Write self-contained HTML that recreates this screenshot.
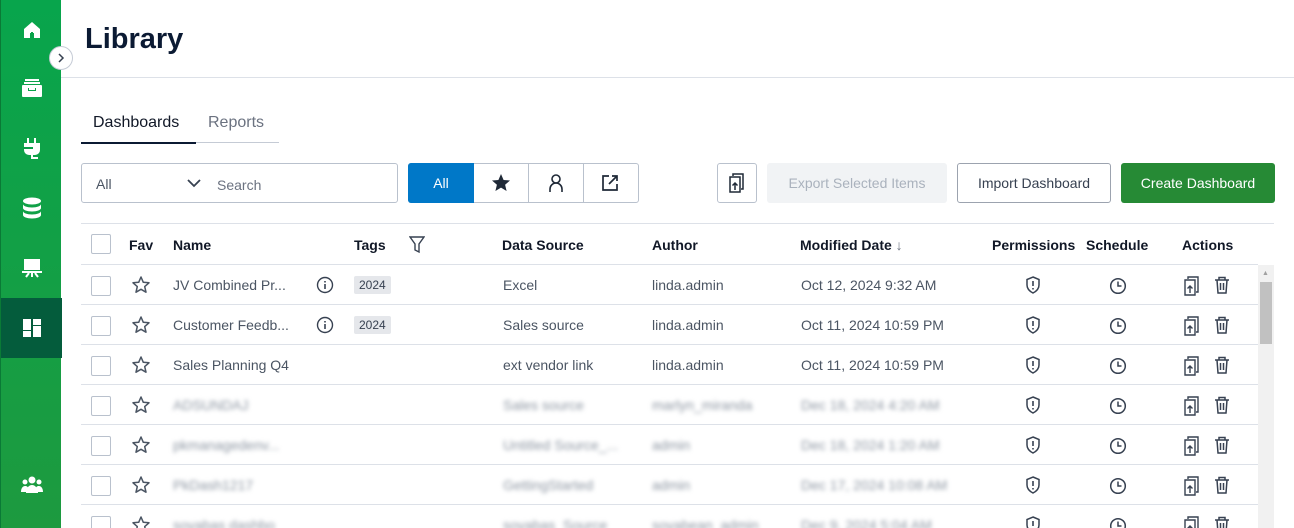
<!DOCTYPE html>
<html><head><meta charset="utf-8"><style>
*{box-sizing:border-box;margin:0;padding:0}
html,body{width:1294px;height:528px;overflow:hidden}
body{background:#fff;font-family:"Liberation Sans",sans-serif;position:relative;color:#1f2937}
.side{position:absolute;left:0;top:0;width:61px;height:528px;background:linear-gradient(#08a54c,#1d9a3f);border-left:1px solid #0a7a36}
.side .it{position:absolute;left:0;width:61px;height:60px;display:flex;align-items:center;justify-content:center}
.side .act{background:#045c3c}
.tog{position:absolute;left:49px;top:46px;width:24px;height:24px;border-radius:50%;background:#fff;border:1px solid #c5cbd5;display:flex;align-items:center;justify-content:center;z-index:3}
h1{position:absolute;left:85px;top:23px;font-size:29px;font-weight:bold;color:#0b1a33}
.hr{position:absolute;left:61px;top:77px;width:1233px;height:1px;background:#dde1e8}
.tabs{position:absolute;left:81px;top:112px;width:198px;height:31px;border-bottom:1px solid #c5cbd5;font-size:16px}
.tabs span{position:absolute;top:2px}
.abs{position:absolute}
.box{position:absolute;border:1px solid #b9c1cd;border-radius:3px}
.btn{position:absolute;top:163px;height:40px;border-radius:3px;font-size:14px;display:flex;align-items:center;justify-content:center}
.row{position:absolute;left:81px;width:1177px;height:40px;border-top:1px solid #dde1e8;font-size:14px;color:#4b5563}
.row>*{position:absolute}
.cb{left:10px;top:11px;width:20px;height:20px;border:1px solid #b9c1cd;border-radius:2px}
.st{left:50px;top:10px}
.t{top:12px}
.blur{filter:blur(2px);color:#8d96a2}
.tag{left:273px;top:11px;background:#e5e7eb;border-radius:2px;font-size:12px;padding:2px 5px;color:#374151}
.hd{font-size:14px;font-weight:bold;color:#111827}
</style></head><body>
<div class="side">
 <div class="it" style="top:0"><svg width="20" height="20" viewBox="0 0 20 20"><path d="M10 2L2 9v9h6v-5h4v5h6V9z" fill="#fff"/><rect x="9" y="12" width="2" height="5" fill="#0aa34a"/></svg></div>
 <div class="it" style="top:58px"><svg width="22" height="22" viewBox="0 0 22 22"><rect x="4" y="2" width="14" height="2" fill="#fff"/><rect x="3" y="5" width="16" height="2" fill="#fff"/><rect x="1" y="8" width="20" height="12" rx="1" fill="#fff"/><rect x="7" y="11" width="8" height="3" fill="#0aa34a"/><rect x="8" y="11" width="6" height="2" fill="#fff"/></svg></div>
 <div class="it" style="top:118px"><svg width="20" height="22" viewBox="0 0 20 22"><rect x="5" y="1" width="2" height="5" fill="#fff"/><rect x="12" y="1" width="2" height="5" fill="#fff"/><path d="M2 6h16v7a5 5 0 0 1-5 5H7a5 5 0 0 1-5-5z" fill="#fff"/><rect x="1" y="10" width="10" height="2" fill="#0b9e48"/><path d="M10 18v3h6" stroke="#fff" stroke-width="2" fill="none"/></svg></div>
 <div class="it" style="top:178px"><svg width="20" height="22" viewBox="0 0 20 22"><ellipse cx="10" cy="4" rx="9" ry="3.5" fill="#fff"/><path d="M1 7c0 2 4 3.5 9 3.5S19 9 19 7v4c0 2-4 3.5-9 3.5S1 13 1 11z" fill="#fff"/><path d="M1 14c0 2 4 3.5 9 3.5S19 16 19 14v4c0 2-4 3.5-9 3.5S1 20 1 18z" fill="#fff"/></svg></div>
 <div class="it" style="top:238px"><svg width="20" height="20" viewBox="0 0 20 20"><rect x="2" y="1" width="16" height="11" fill="#fff"/><rect x="0" y="13" width="20" height="2" fill="#fff"/><path d="M4 19l3-4M16 19l-3-4M10 15v4" stroke="#fff" stroke-width="2"/></svg></div>
 <div class="it act" style="top:298px"><svg width="20" height="20" viewBox="0 0 20 20"><rect x="1" y="1" width="8" height="11" fill="#fff"/><rect x="1" y="13" width="8" height="6" fill="#fff"/><rect x="11" y="1" width="8" height="6" fill="#fff"/><rect x="11" y="8" width="8" height="11" fill="#fff"/></svg></div>
 <div class="it" style="top:455px"><svg width="22" height="20" viewBox="0 0 22 20"><circle cx="11" cy="5" r="3.5" fill="#fff"/><circle cx="4" cy="7" r="2.5" fill="#fff"/><circle cx="18" cy="7" r="2.5" fill="#fff"/><path d="M5 18c0-5 3-8 6-8s6 3 6 8z" fill="#fff"/><path d="M0 17c0-4 2-6 4-6s3 1 3 2v4zM22 17c0-4-2-6-4-6s-3 1-3 2v4z" fill="#fff"/></svg></div>
</div>
<div class="tog"><svg width="10" height="10" viewBox="0 0 10 10"><path d="M3 1l4 4-4 4" stroke="#374151" stroke-width="1.5" fill="none"/></svg></div>
<h1>Library</h1>
<div class="hr"></div>
<div class="tabs"><span style="left:12px;color:#111827">Dashboards</span><span style="left:127px;color:#6b7280">Reports</span><div class="abs" style="left:0;top:30px;width:115px;height:2px;background:#0b1a33"></div></div>

<div class="box" style="left:81px;top:163px;width:317px;height:40px"></div>
<div class="abs" style="left:96px;top:176px;font-size:14px;color:#4b5563">All</div>
<svg class="abs" style="left:187px;top:178px" width="14" height="10" viewBox="0 0 14 10"><path d="M1 2l6 6 6-6" stroke="#374151" stroke-width="1.8" fill="none"/></svg>
<div class="abs" style="left:217px;top:177px;font-size:14px;color:#6b7280">Search</div>

<div class="box" style="left:408px;top:163px;width:231px;height:40px"></div>
<div class="abs" style="left:408px;top:163px;width:66px;height:40px;background:#0078c8;border-radius:3px 0 0 3px;color:#fff;font-size:14px;display:flex;align-items:center;justify-content:center">All</div>
<div class="abs" style="left:528px;top:164px;width:1px;height:38px;background:#b9c1cd"></div>
<div class="abs" style="left:583px;top:164px;width:1px;height:38px;background:#b9c1cd"></div>
<svg class="abs" style="left:491px;top:173px" width="20" height="20" viewBox="0 0 20 20"><path d="M10 1l2.6 6 6.4.5-4.9 4.2 1.5 6.3L10 14.6 4.4 18l1.5-6.3L1 7.5 7.4 7z" fill="#1f2937"/></svg>
<svg class="abs" style="left:547px;top:173px" width="18" height="20" viewBox="0 0 18 20"><circle cx="9" cy="6" r="4" stroke="#1f2937" stroke-width="1.6" fill="none"/><path d="M3 19v-3a6 6 0 0 1 12 0v3" stroke="#1f2937" stroke-width="1.6" fill="none"/></svg>
<svg class="abs" style="left:601px;top:174px" width="18" height="18" viewBox="0 0 18 18"><path d="M8 2H2v14h14v-6M11 2h5v5M16 2l-8 8" stroke="#1f2937" stroke-width="1.7" fill="none"/></svg>

<div class="box" style="left:717px;top:163px;width:40px;height:40px"></div>
<svg class="abs" style="left:729px;top:173px" width="16" height="20" viewBox="0 0 16 20"><path d="M4 3V1h10v15h-2M1 4h10v15H1z" stroke="#1f2937" stroke-width="1.5" fill="none"/><path d="M6 17v-7M3.5 12.5L6 10l2.5 2.5" stroke="#1f2937" stroke-width="1.5" fill="none"/></svg>
<div class="btn" style="left:767px;width:180px;background:#f1f3f5;color:#aab2bd">Export Selected Items</div>
<div class="btn" style="left:957px;width:154px;border:1px solid #9ca3af;color:#374151">Import Dashboard</div>
<div class="btn" style="left:1121px;width:154px;background:#268a35;color:#fff">Create Dashboard</div>

<div class="abs" style="left:81px;top:223px;width:1193px;height:1px;background:#dde1e8"></div>
<div class="row hd" style="top:224px;border-top:none">
 <div class="cb" style="top:10px"></div>
 <span style="left:48px;top:13px">Fav</span><span style="left:92px;top:13px">Name</span><span style="left:273px;top:13px">Tags</span>
 <svg style="left:328px;top:12px" width="16" height="18" viewBox="0 0 16 18"><path d="M1 1h14l-5 7v8l-4-2V8z" stroke="#374151" stroke-width="1.4" fill="none"/></svg>
 <span style="left:421px;top:13px">Data Source</span><span style="left:571px;top:13px">Author</span><span style="left:719px;top:13px">Modified Date <span style="font-weight:normal;color:#6b7280">↓</span></span>
 <span style="left:911px;top:13px">Permissions</span><span style="left:1005px;top:13px">Schedule</span><span style="left:1101px;top:13px">Actions</span>
</div>

<div class="abs" style="left:1258px;top:265px;width:16px;height:263px;background:#f1f1f1"></div>
<div class="abs" style="left:1260px;top:282px;width:12px;height:62px;background:#c1c1c1"></div>
<div class="abs" style="left:1262px;top:270px;font-size:7px;color:#a0a0a0">▲</div>

<div id="rows"></div>
<script>
var star='<svg class="st" width="20" height="20" viewBox="0 0 20 20"><path d="M10 2l2.3 5.3 5.7.5-4.3 3.8 1.3 5.6L10 14.3 5 17.2l1.3-5.6L2 7.8l5.7-.5z" stroke="#4b5563" stroke-width="1.5" fill="none" stroke-linejoin="round"/></svg>';
var perm='<svg style="left:945px;top:11px" width="14" height="18" viewBox="0 0 14 18"><path d="M7 1l6 2.5V9c0 4-3 6.5-6 8-3-1.5-6-4-6-8V3.5z" stroke="#374151" stroke-width="1.5" fill="none"/><path d="M7 5v5M7 12v1.5" stroke="#374151" stroke-width="1.6"/></svg>';
var clk='<svg style="left:1028px;top:12px" width="18" height="18" viewBox="0 0 18 18"><circle cx="9" cy="9" r="7.3" stroke="#374151" stroke-width="1.5" fill="none"/><path d="M9 4.5V9h3.5" stroke="#374151" stroke-width="1.5" fill="none"/></svg>';
var act='<svg style="left:1103px;top:11px" width="16" height="20" viewBox="0 0 16 20"><path d="M4 3V1h10v15h-2M1 4h10v15H1z" stroke="#374151" stroke-width="1.4" fill="none"/><path d="M6 17v-7M3.5 12.5L6 10l2.5 2.5" stroke="#374151" stroke-width="1.4" fill="none"/></svg><svg style="left:1133px;top:11px" width="16" height="18" viewBox="0 0 16 18"><path d="M1 4h14M5 4V1.5h6V4M3 4l1 13h8l1-13M6.5 7v7M9.5 7v7" stroke="#374151" stroke-width="1.5" fill="none"/></svg>';
var info='<svg style="left:235px;top:11px" width="18" height="18" viewBox="0 0 18 18"><circle cx="9" cy="9" r="7.5" stroke="#374151" stroke-width="1.4" fill="none"/><path d="M9 8v5M9 5v1.5" stroke="#374151" stroke-width="1.6"/></svg>';
var d=[
['JV Combined Pr...',1,1,'Excel','linda.admin','Oct 12, 2024 9:32 AM',0],
['Customer Feedb...',1,1,'Sales source','linda.admin','Oct 11, 2024 10:59 PM',0],
['Sales Planning Q4',0,0,'ext vendor link','linda.admin','Oct 11, 2024 10:59 PM',0],
['ADSUNDAJ',0,0,'Sales source','marlyn_miranda','Dec 18, 2024 4:20 AM',1],
['pkmanagedenv...',0,0,'Untitled Source_...','admin','Dec 18, 2024 1:20 AM',1],
['PkDash1217',0,0,'GettingStarted','admin','Dec 17, 2024 10:08 AM',1],
['soyabas dashbo',0,0,'soyabas_Source','soyabean_admin','Dec 9, 2024 5:04 AM',1]];
var h='';
d.forEach(function(r,i){var b=r[6]?' blur':'';
h+='<div class="row" style="top:'+(264+i*40)+'px"><div class="cb"></div>'+star+
'<span class="t'+b+'" style="left:92px">'+r[0]+'</span>'+(r[1]?info:'')+(r[2]?'<span class="tag">2024</span>':'')+
'<span class="t'+b+'" style="left:422px">'+r[3]+'</span><span class="t'+b+'" style="left:571px">'+r[4]+'</span><span class="t'+b+'" style="left:720px">'+r[5]+'</span>'+perm+clk+act+'</div>';});
document.getElementById('rows').innerHTML=h;
</script>
</body></html>
